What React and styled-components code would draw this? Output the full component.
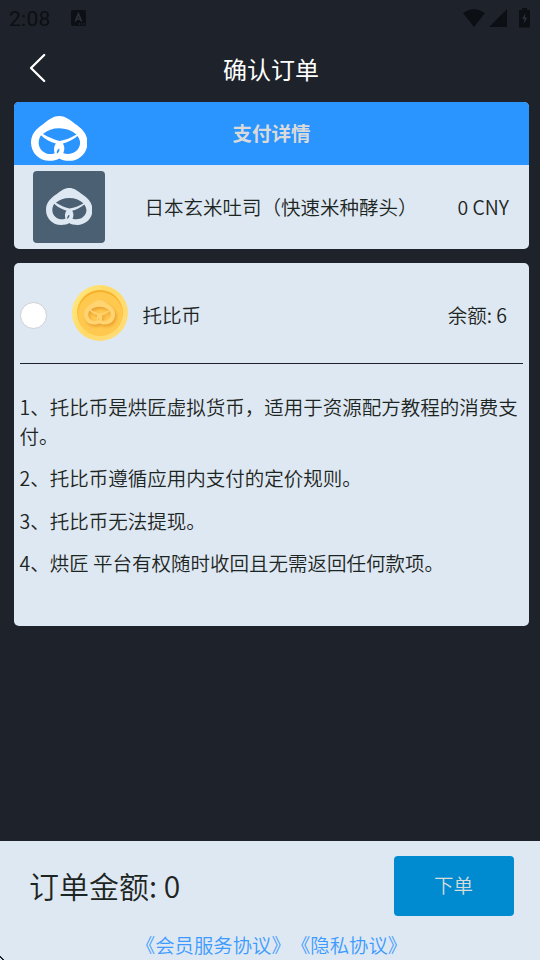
import styled, { createGlobalStyle } from "styled-components";

const rules = [
  "1、托比币是烘匠虚拟货币，适用于资源配方教程的消费支付。",
  "2、托比币遵循应用内支付的定价规则。",
  "3、托比币无法提现。",
  "4、烘匠 平台有权随时收回且无需返回任何款项。",
];

function Pretzel({ width, color }) {
  return (
    <svg width={width} height={width * 0.8} viewBox="0 0 170 136" fill={color}>
      <path
        fillRule="evenodd"
        d="M85 0C68 0 55 10 38 23C15 38 0 55 0 80C0 112 25 135 55 135C68 135 78 133 85 128C92 133 102 135 115 135C145 135 170 112 170 80C170 55 155 38 132 23C115 10 102 0 85 0Z
        M36 54C50 43 65 37 85 37C105 37 122 43 137 56C120 66 104 73 86 75C68 71 52 63 36 54Z
        M30 58C44 71 58 78 75 83C69 91 68 101 71 112C59 117 45 115 36 107C20 95 20 73 30 58Z
        M140 60C152 76 150 95 134 107C124 115 109 116 97 112C102 101 101 91 96 83C112 78 127 71 140 60Z
        M85 98C79 101 76 108 78 113C83 110 87 104 85 98Z"
      />
    </svg>
  );
}

function Coin() {
  return (
    <svg width="56" height="56" viewBox="0 0 56 56">
      <defs>
        <linearGradient id="rim" x1="0" y1="0.2" x2="1" y2="0.8">
          <stop offset="0" stopColor="#ffe77c" />
          <stop offset="0.45" stopColor="#ffda68" />
          <stop offset="1" stopColor="#ffdc78" />
        </linearGradient>
        <linearGradient id="edge" x1="0" y1="0" x2="0" y2="1">
          <stop offset="0" stopColor="#f6ae25" />
          <stop offset="1" stopColor="#ffcf59" />
        </linearGradient>
        <filter id="relief" x="-30%" y="-30%" width="170%" height="180%">
          <feDropShadow dx="1.500" dy="2" stdDeviation="1.500" floodColor="#e08a1c" floodOpacity="0.7" />
        </filter>
      </defs>
      <circle cx="28" cy="28" r="28" fill="url(#rim)" />
      <circle cx="28" cy="28" r="23" fill="url(#edge)" />
      <circle cx="28.3" cy="29" r="22" fill="#ffc950" />
      <g transform="translate(12 15)" filter="url(#relief)">
        <Pretzel width={31} color="#ffd471" />
      </g>
    </svg>
  );
}

function App() {
  return (
    <>
      <GlobalStyle />
      <Page>
        <StatusBar>
          <Clock>2:08</Clock>
          <svg width="15" height="16" viewBox="0 0 15 16">
            <rect width="15" height="16" rx="2" fill="#0c0f13" />
            <path d="M4.2 11.500L7.4 4L10.6 11.500M5.4 9H9.4" fill="none" stroke="#2b3038" strokeWidth="1.700" />
            <path d="M8 14h1M10.3 14h1M12.5 14h1" stroke="#343a42" />
          </svg>
          <Signals>
            <svg width="68" height="21" viewBox="0 0 68 21" fill="#0c0f13">
              <path d="M0 5Q11-2.6 22 5L11 19Z" />
              <path d="M44 1V19H26Z" />
              <path d="M59 0H64V2H67V19.500H56V2H59Z" />
              <path d="M62.500 5L59 11H61.500L60.500 16L64.500 9.500H62Z" fill="#2b3038" />
            </svg>
          </Signals>
        </StatusBar>
        <Header>
          <BackButton aria-label="返回">
            <svg width="18" height="30" viewBox="0 0 18 30" fill="none" stroke="#fff" strokeWidth="2.3" strokeLinecap="round" strokeLinejoin="round">
              <path d="M15.200 2L2 15L15.200 28" />
            </svg>
          </BackButton>
          <Title>确认订单</Title>
          <span />
        </Header>
        <Content>
          <Card $height={147}>
            <CardHead>
              <Pretzel width={56.5} color="#fff" />
              <h2>支付详情</h2>
              <span />
            </CardHead>
            <Product>
              <Thumb>
                <Pretzel width={46.5} color="#dee8f2" />
              </Thumb>
              <Name>日本玄米吐司（快速米种酵头）</Name>
              <Price>0 CNY</Price>
            </Product>
          </Card>
          <Card $height={363}>
            <Wallet>
              <Radio />
              <Coin />
              <Currency>托比币</Currency>
              <Balance>余额: 6</Balance>
            </Wallet>
            <Rules>
              {rules.map((rule) => (
                <p key={rule}>{rule}</p>
              ))}
            </Rules>
          </Card>
        </Content>
        <Footer>
          <Summary>
            <Total>订单金额: 0</Total>
            <Submit>下单</Submit>
          </Summary>
          <Links>
            <span>《会员服务协议》</span>
            <span>《隐私协议》</span>
          </Links>
          <Corner />
        </Footer>
      </Page>
    </>
  );
}

export default App;

const GlobalStyle = createGlobalStyle`
  * {
    box-sizing: border-box;
  }

  body {
    margin: 0;
    background: #1e222a;
  }

  svg {
    display: block;
    flex: none;
  }
`;

const Page = styled.div`
  display: flex;
  flex-direction: column;
  width: 540px;
  height: 960px;
  overflow: hidden;
  background: #1e222a;
  color: #1d2523;
  font-family: "Noto Sans CJK SC", sans-serif;
  font-size: 19.5px;
  font-weight: 350;
  line-height: 29px;
`;

const StatusBar = styled.div`
  display: flex;
  align-items: center;
  height: 36px;
  padding: 0 9px;
`;

const Clock = styled.div`
  width: 62px;
  padding-top: 2px;
  color: #0c0f13;
  font-family: Roboto, sans-serif;
  font-size: 21px;
  font-weight: 400;
  letter-spacing: 0.3px;
`;

const Signals = styled.div`
  margin-left: auto;
`;

const Header = styled.header`
  display: grid;
  grid-template-columns: 100px 1fr 98px;
  align-items: center;
  height: 66px;
  padding-bottom: 2px;
`;

const BackButton = styled.button`
  padding: 0 0 0 29px;
  border: 0;
  background: none;
`;

const Title = styled.h1`
  margin: 0;
  color: #fff;
  font-size: 24px;
  font-weight: 400;
  text-align: center;
`;

const Content = styled.main`
  display: flex;
  flex: 1;
  flex-direction: column;
  gap: 14px;
  padding: 0 11px 0 14px;
`;

const Card = styled.section`
  height: ${(props) => props.$height}px;
  overflow: hidden;
  border-radius: 5px;
  background: #dee8f2;
`;

const CardHead = styled.div`
  display: grid;
  grid-template-columns: 80px 1fr 80px;
  height: 63px;
  background: #2a94ff;

  svg {
    margin: 14px 0 0 16.7px;
  }

  h2 {
    margin: 0;
    color: #dadada;
    font-size: 19.5px;
    font-weight: 700;
    line-height: 61px;
    text-align: center;
  }
`;

const Product = styled.div`
  display: flex;
  align-items: center;
  height: 84px;
  padding: 0 20px 0 19px;
`;

const Thumb = styled.div`
  display: flex;
  align-items: center;
  justify-content: center;
  width: 72px;
  height: 72px;
  border-radius: 4px;
  background: #4b6073;
`;

const Price = styled.div`
  padding-bottom: 2px;
`;

const Name = styled(Price)`
  flex: 1;
  padding-left: 39.5px;
`;

const Wallet = styled.div`
  display: flex;
  align-items: center;
  height: 101px;
  margin: 0 6px;
  padding-right: 16px;
  border-bottom: 1px solid #1e222a;
`;

const Radio = styled.div`
  width: 27px;
  height: 27px;
  margin: 5px 25px 0 0;
  border: 1px solid #cfcfd3;
  border-radius: 50%;
  background: #fff;
`;

const Balance = styled.div`
  padding-top: 2px;
`;

const Currency = styled(Balance)`
  flex: 1;
  padding-left: 14.5px;
`;

const Rules = styled.div`
  padding: 28px 6px 0 5.5px;

  p {
    margin: 0 0 13.4px;
  }
`;

const Footer = styled.footer`
  position: relative;
  height: 119px;
  padding-top: 15px;
  background: #dee8f2;
`;

const Summary = styled.div`
  display: flex;
  align-items: center;
  justify-content: space-between;
  padding: 0 26px 0 29px;
`;

const Total = styled.div`
  padding-bottom: 2px;
  font-size: 30px;
`;

const Submit = styled.button`
  width: 120px;
  height: 60px;
  padding: 0 1px 3px 0;
  border: 0;
  border-radius: 4px;
  background: #008bd0;
  color: #dadada;
  font: inherit;
`;

const Links = styled.div`
  display: flex;
  justify-content: center;
  padding: 14px 0 0 3px;
  color: #3d9bff;
  font-size: 19.4px;
`;

// dark page showing at the rounded screen corner
const Corner = styled.div`
  position: absolute;
  bottom: 0;
  left: 0;
  width: 4px;
  height: 4px;
  background: linear-gradient(45deg, #dee8f2 35%, #1e222a 36%, #1e222a 55%, #dee8f2 56%);
`;
